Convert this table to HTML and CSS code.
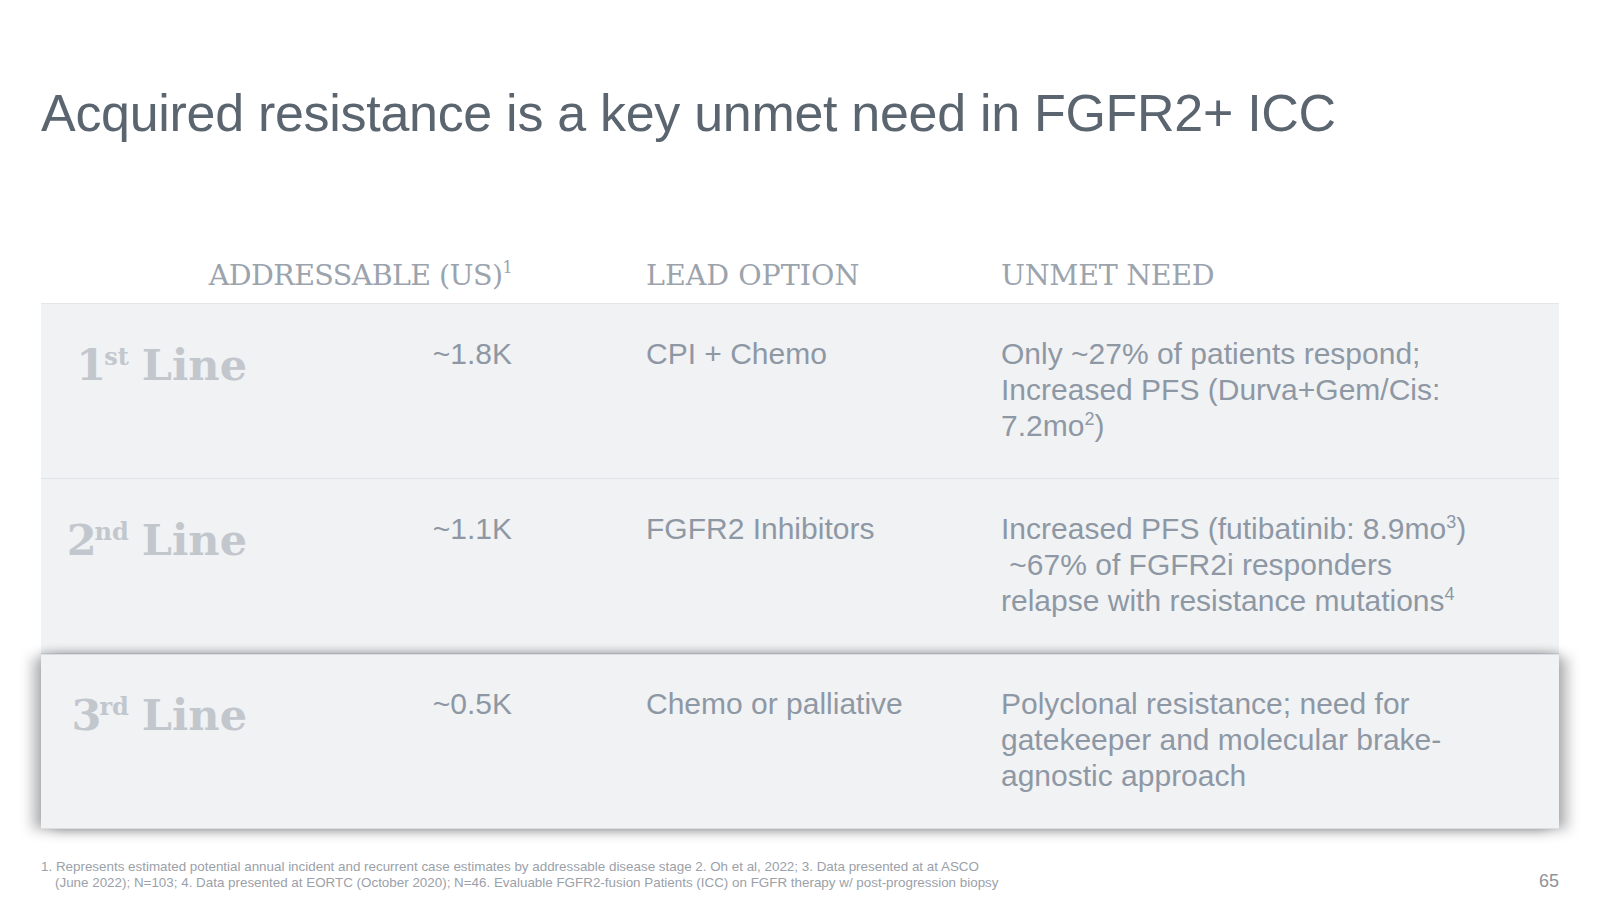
FILE: index.html
```html
<!DOCTYPE html>
<html>
<head>
<meta charset="utf-8">
<link rel="stylesheet" href="styles.css">
</head>
<body>
<div class="slide">
  <h1 class="title">Acquired resistance is a key unmet need in FGFR2+ ICC</h1>
  <div class="table">
    <div class="head">
      <div class="h-addr">ADDRESSABLE (US)<sup>1</sup></div>
      <div class="h-lead">LEAD OPTION</div>
      <div class="h-need">UNMET NEED</div>
    </div>
    <div class="row">
      <div class="label">1<sup>st</sup> Line</div>
      <div class="val">~1.8K</div>
      <div class="lead">CPI + Chemo</div>
      <div class="need">Only ~27% of patients respond;<br>Increased PFS (Durva+Gem/Cis:<br>7.2mo<sup>2</sup>)</div>
    </div>
    <div class="row">
      <div class="label">2<sup>nd</sup> Line</div>
      <div class="val">~1.1K</div>
      <div class="lead">FGFR2 Inhibitors</div>
      <div class="need">Increased PFS (futibatinib: 8.9mo<sup>3</sup>)<br>&nbsp;~67% of FGFR2i responders<br>relapse with resistance mutations<sup>4</sup></div>
    </div>
    <div class="row row-hl">
      <div class="label">3<sup>rd</sup> Line</div>
      <div class="val">~0.5K</div>
      <div class="lead">Chemo or palliative</div>
      <div class="need">Polyclonal resistance; need for<br>gatekeeper and molecular brake-<br>agnostic approach</div>
    </div>
  </div>
  <div class="footer">
    <div class="notes">
      <div>1. Represents estimated potential annual incident and recurrent case estimates by addressable disease stage 2. Oh et al, 2022; 3. Data presented at at ASCO</div>
      <div class="indent">(June 2022); N=103; 4. Data presented at EORTC (October 2020); N=46. Evaluable FGFR2-fusion Patients (ICC) on FGFR therapy w/ post-progression biopsy</div>
    </div>
    <div class="page">65</div>
  </div>
</div>
</body>
</html>
```
FILE: styles.css
```css
* { box-sizing: border-box; }
html, body { margin: 0; padding: 0; background: #ffffff; }
.slide {
  width: 1600px;
  height: 900px;
  position: relative;
  overflow: hidden;
  font-family: "Liberation Sans", Arial, sans-serif;
  padding: 0 41px;
}
.title {
  margin: 0;
  padding-top: 84px;
  font-weight: normal;
  font-size: 52px;
  line-height: 1.15;
  color: #5b6570;
  letter-spacing: -0.3px;
}
.table {
  margin-top: 115px;
  width: 1518px;
}
.head {
  display: grid;
  grid-template-columns: 471px 489px 1fr;
  height: 45px;
  border-bottom: 1px solid #e3e5e8;
  font-family: "DejaVu Serif", serif;
  font-size: 28.5px;
  color: #9ba3ad;
  align-items: start;
}
.head sup { font-size: 16px; vertical-align: 12px; line-height: 0; }
.h-addr { text-align: right; letter-spacing: -0.6px; }
.h-lead { padding-left: 134px; }
.h-need { letter-spacing: -0.3px; }
.row {
  display: grid;
  grid-template-columns: 206px 265px 489px 1fr;
  height: 175px;
  background: #f1f2f4;
  border-bottom: 1px solid #dfe2e6;
  padding-top: 32px;
  font-size: 30px;
  line-height: 36px;
  color: #8e98a4;
  position: relative;
}
.row-hl {
  border-top: 1px solid #dadde1;
  border-bottom: 1px solid #dadde1;
  padding-top: 31px;
  box-shadow: -10px 2px 12px -1px rgba(0,0,0,0.26), 10px 2px 12px -1px rgba(0,0,0,0.26), 0 -3px 8px rgba(0,0,0,0.12);
  z-index: 1;
}
.row sup { font-size: 18px; vertical-align: 11px; line-height: 0; }
.label {
  text-align: right;
  font-family: "DejaVu Serif", serif;
  font-weight: bold;
  font-size: 43px;
  line-height: 36px;
  padding-top: 11px;
  color: #c2c7cd;
}
.label sup { font-size: 24px; vertical-align: 15px; margin-left: -2px; margin-right: -2px; }
.val { text-align: right; }
.lead { padding-left: 134px; }
.footer {
  position: absolute;
  left: 41px;
  right: 41px;
  top: 859px;
  display: flex;
  justify-content: space-between;
  align-items: flex-end;
}
.notes {
  font-size: 13.4px;
  line-height: 16px;
  color: #9ba1a9;
}
.indent { padding-left: 14px; }
.page {
  font-size: 18px;
  color: #8e939a;
  line-height: 18px;
  margin-bottom: 1px;
}
```
